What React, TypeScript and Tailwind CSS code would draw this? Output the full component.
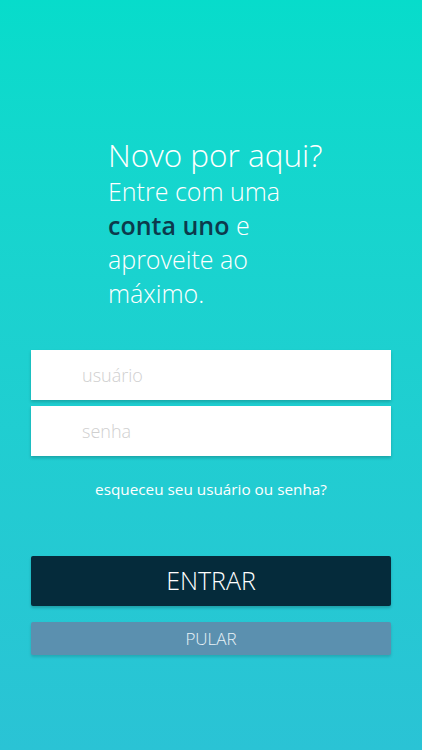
export default function App() {
  return (
    <div
      className="w-[422px] h-[750px] flex flex-col bg-gradient-to-b from-[#07dccb] to-[#2ac3d5]"
      style={{ fontFamily: '"Open Sans", sans-serif' }}
    >
      <div className="pl-[108px] pt-[136px] text-white font-light">
        <div className="text-[31.5px] leading-[38px]">Novo por aqui?</div>
        <div className="text-[25px] leading-[34px]">
          Entre com uma
          <br />
          <span className="font-semibold text-[#0c3a4c]">conta uno</span> e
          <br />
          aproveite ao
          <br />
          máximo.
        </div>
      </div>
      <div className="px-[31px] mt-[40px] flex flex-col gap-[6px]">
        <div className="h-[50px] bg-white shadow-[0_2px_3px_rgba(0,0,0,0.2)] flex items-center pl-[51px] text-[18px] font-light text-[#cfcfcf]">
          usuário
        </div>
        <div className="h-[50px] bg-white shadow-[0_2px_3px_rgba(0,0,0,0.2)] flex items-center pl-[51px] text-[18px] font-light text-[#cfcfcf]">
          senha
        </div>
      </div>
      <div className="mt-[22px] text-center text-white text-[15.3px] leading-[22px]">
        esqueceu seu usuário ou senha?
      </div>
      <div className="px-[31px] mt-[56px] flex flex-col gap-[16px]">
        <div className="h-[50px] rounded-[2px] bg-[#052b3b] shadow-[0_2px_3px_rgba(0,0,0,0.2)] flex items-center justify-center text-white text-[25px] font-light">
          ENTRAR
        </div>
        <div className="h-[33px] rounded-[2px] bg-[#5b90af] shadow-[0_2px_3px_rgba(0,0,0,0.15)] flex items-center justify-center text-[#e8f2f7] text-[17px] font-light">
          PULAR
        </div>
      </div>
    </div>
  );
}
